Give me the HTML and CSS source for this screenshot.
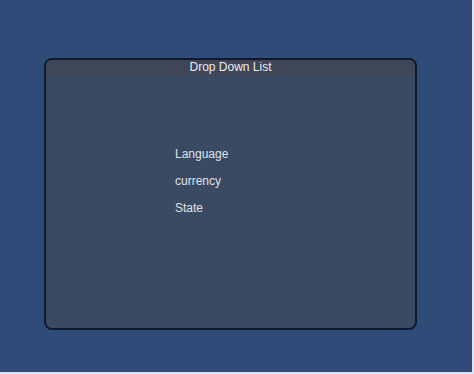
FILE: index.html
```html
<!DOCTYPE html>
<html lang="en">
<head>
    <meta charset="UTF-8">
    <meta name="viewport" content="width=device-width, initial-scale=1.0">
    <title>Drop Down List</title>
    <link rel="stylesheet" href="styles.css">
</head>
<body>
    <div class="screen">
        <div class="window">
            <div class="title">Drop Down List</div>
            <div class="content">
                <ul class="list">
                    <li>Language</li>
                    <li>currency</li>
                    <li>State</li>
                </ul>
            </div>
        </div>
    </div>
</body>
</html>
```

FILE: styles.css
```css
html {
    background: #dde4ee;
}
body {
    margin: 0;
    font-family: "Liberation Sans", Arial, sans-serif;
}
.screen {
    width: 472px;
    height: 372px;
    background: #2f4b78;
    padding: 58px 0 0 44px;
    box-sizing: border-box;
}
.window {
    width: 373px;
    height: 272px;
    box-sizing: border-box;
    border: 2px solid #0f1a30;
    border-radius: 8px;
    background: #3a4a63;
    overflow: hidden;
    display: flex;
    flex-direction: column;
}
.title {
    height: 15px;
    background: #3f4657;
    color: #ececec;
    font-size: 12px;
    line-height: 15px;
    text-align: center;
}
.content {
    flex: 1;
    padding: 71px 0 0 129px;
}
.list {
    list-style: none;
    margin: 0;
    padding: 0;
    display: flex;
    flex-direction: column;
    gap: 11px;
    color: #dfe2e8;
    font-size: 12px;
    line-height: 16px;
}
```
